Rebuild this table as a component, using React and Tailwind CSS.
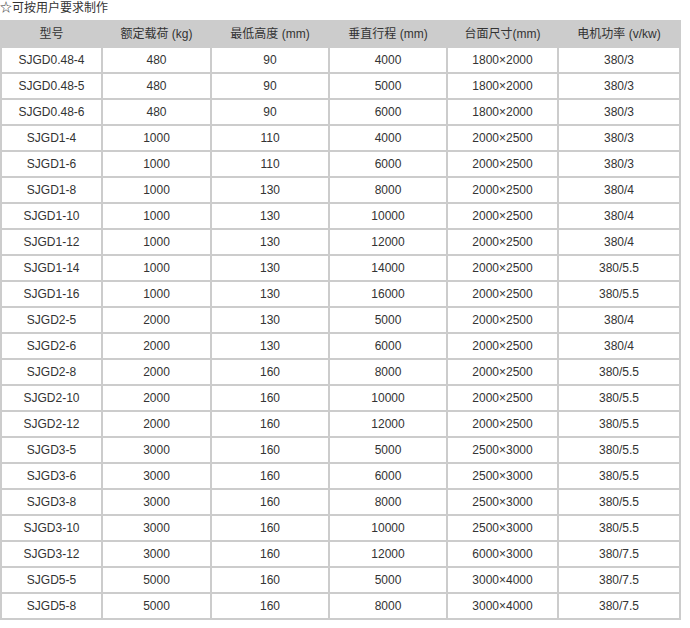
import React from "react";

const rows = [
  ["SJGD0.48-4", "480", "90", "4000", "1800×2000", "380/3"],
  ["SJGD0.48-5", "480", "90", "5000", "1800×2000", "380/3"],
  ["SJGD0.48-6", "480", "90", "6000", "1800×2000", "380/3"],
  ["SJGD1-4", "1000", "110", "4000", "2000×2500", "380/3"],
  ["SJGD1-6", "1000", "110", "6000", "2000×2500", "380/3"],
  ["SJGD1-8", "1000", "130", "8000", "2000×2500", "380/4"],
  ["SJGD1-10", "1000", "130", "10000", "2000×2500", "380/4"],
  ["SJGD1-12", "1000", "130", "12000", "2000×2500", "380/4"],
  ["SJGD1-14", "1000", "130", "14000", "2000×2500", "380/5.5"],
  ["SJGD1-16", "1000", "130", "16000", "2000×2500", "380/5.5"],
  ["SJGD2-5", "2000", "130", "5000", "2000×2500", "380/4"],
  ["SJGD2-6", "2000", "130", "6000", "2000×2500", "380/4"],
  ["SJGD2-8", "2000", "160", "8000", "2000×2500", "380/5.5"],
  ["SJGD2-10", "2000", "160", "10000", "2000×2500", "380/5.5"],
  ["SJGD2-12", "2000", "160", "12000", "2000×2500", "380/5.5"],
  ["SJGD3-5", "3000", "160", "5000", "2500×3000", "380/5.5"],
  ["SJGD3-6", "3000", "160", "6000", "2500×3000", "380/5.5"],
  ["SJGD3-8", "3000", "160", "8000", "2500×3000", "380/5.5"],
  ["SJGD3-10", "3000", "160", "10000", "2500×3000", "380/5.5"],
  ["SJGD3-12", "3000", "160", "12000", "6000×3000", "380/7.5"],
  ["SJGD5-5", "5000", "160", "5000", "3000×4000", "380/7.5"],
  ["SJGD5-8", "5000", "160", "8000", "3000×4000", "380/7.5"],
];

const heads = ["型号", "额定载荷 (kg)", "最低高度 (mm)", "垂直行程 (mm)", "台面尺寸(mm)", "电机功率 (v/kw)"];

export default function App() {
  return (
    <div
      className="bg-white text-[12px] text-[#333] min-h-[628px]"
      style={{ fontFamily: '"Liberation Sans", Arial, "Noto Sans CJK SC", sans-serif' }}
    >
      <p className="h-[20px] leading-[17px]">☆可按用户要求制作</p>
      <table className="table-fixed w-[681px] bg-[#ccc] border-separate border-spacing-[2px]">
        <colgroup>
          <col className="w-[99px]" />
          <col className="w-[107px]" />
          <col className="w-[116px]" />
          <col className="w-[116px]" />
          <col className="w-[109px]" />
          <col className="w-[120px]" />
        </colgroup>
        <thead>
          <tr>
            {heads.map((h) => (
              <th key={h} className="h-[24px] p-0 font-normal text-center bg-[#ccc]">{h}</th>
            ))}
          </tr>
        </thead>
        <tbody>
          {rows.map((r) => (
            <tr key={r[0]}>
              {r.map((c, i) => (
                <td key={i} className="h-[24px] p-0 text-center bg-white">{c}</td>
              ))}
            </tr>
          ))}
        </tbody>
      </table>
    </div>
  );
}
